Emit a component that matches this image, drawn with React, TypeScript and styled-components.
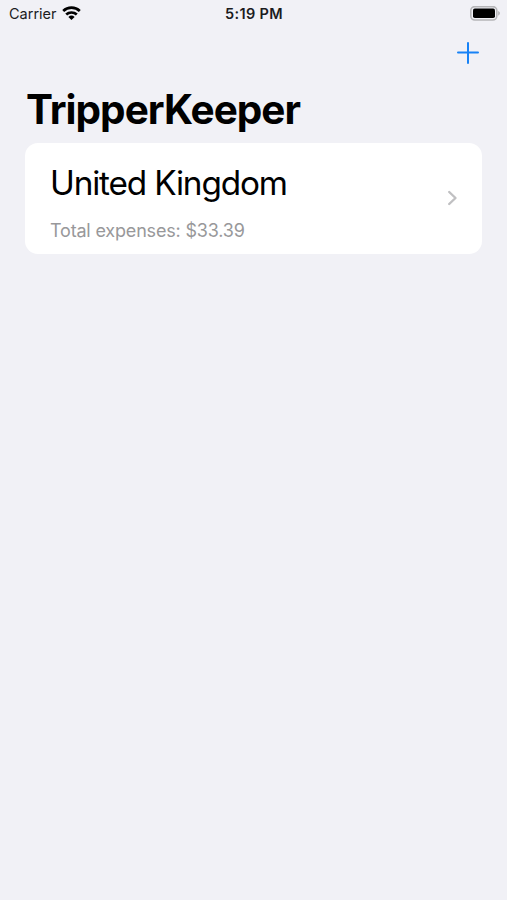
import React from "react";
import styled, { createGlobalStyle } from "styled-components";

const Global = createGlobalStyle`
  * { box-sizing: border-box; }
  html, body { margin: 0; background: #f1f1f6; }
  body { font-family: Inter, "Liberation Sans", sans-serif; color: #000; }
`;

const Screen = styled.div`
  width: 507px;
  height: 900px;
  overflow: hidden;
  background: #f1f1f6;
  display: flex;
  flex-direction: column;
`;

const StatusBar = styled.header`
  height: 27px;
  padding: 0 7px 0 9px;
  display: grid;
  grid-template-columns: 1fr auto 1fr;
  align-items: center;
`;

const Carrier = styled.div`
  display: flex;
  align-items: center;
  gap: 5px;
  font-size: 14.5px;
  line-height: 18px;
  white-space: nowrap;
  color: #1c1c1e;
`;

const WifiIcon = styled.svg`
  display: block;
  margin-bottom: 1px;
`;

const Clock = styled.time`
  margin-right: 1px;
  font-size: 14.5px;
  line-height: 18px;
  font-weight: 600;
  letter-spacing: 0.35px;
  color: #1c1c1e;
`;

const Battery = styled.svg`
  justify-self: end;
  display: block;
`;

const NavBar = styled.nav`
  height: 52px;
  padding: 0 28px;
  display: flex;
  justify-content: flex-end;
  align-items: center;
`;

const AddButton = styled.button`
  border: 0;
  padding: 0;
  background: none;
  display: flex;
`;

const Title = styled.h1`
  margin: 5px 0 0 26px;
  height: 59px;
  font-size: 40.5px;
  line-height: 51px;
  font-weight: 700;
  letter-spacing: -0.98px;
`;

const TripCard = styled.article`
  margin: 0 25px;
  height: 111px;
  padding: 0 24px 0 25px;
  border-radius: 13px;
  background: #fff;
  display: flex;
  align-items: center;
  justify-content: space-between;
`;

const TripInfo = styled.div`
  display: flex;
  flex-direction: column;
  gap: 17px;
  padding-top: 8px;
`;

const Country = styled.h2`
  margin: 0;
  font-size: 33.3px;
  line-height: 40px;
  font-weight: 400;
  letter-spacing: -1.15px;
`;

const Expenses = styled.p`
  margin: 0;
  font-size: 18px;
  line-height: 22px;
  letter-spacing: -0.18px;
  color: #98989a;
`;

const Chevron = styled.svg`
  display: block;
  margin-bottom: 1px;
`;

export default function App() {
  return (
    <>
      <Global />
      <Screen>
        <StatusBar>
          <Carrier>
            Carrier
            <WifiIcon width="19" height="14" viewBox="0 0 19 14" fill="none" stroke="#000" strokeWidth="2.7">
              <path d="M1.2 5a12 12 0 0 1 16.6 0M4.2 8.6a7.7 7.7 0 0 1 10.6 0" />
              <path d="M9.5 14 6.4 10.9a4.5 4.5 0 0 1 6.2 0Z" fill="#000" stroke="none" />
            </WifiIcon>
          </Carrier>
          <Clock>5:19 PM</Clock>
          <Battery width="30" height="15" viewBox="0 0 30 15">
            <rect x=".8" y=".6" width="26" height="13.4" rx="4" fill="none" stroke="#b5b5b8" strokeWidth="1.6" />
            <rect x="3" y="2.6" width="22" height="9.4" rx="1.8" />
            <path d="M28.2 5c2.2.8 2.2 3.8 0 4.6Z" fill="#b0b0b3" />
          </Battery>
        </StatusBar>
        <NavBar>
          <AddButton aria-label="Add trip">
            <svg width="22" height="22" viewBox="0 0 22 22" stroke="#1782f6" strokeWidth="2" strokeLinecap="round">
              <path d="M11 1v20M1 10.5h20" />
            </svg>
          </AddButton>
        </NavBar>
        <Title>TripperKeeper</Title>
        <TripCard>
          <TripInfo>
            <Country>United Kingdom</Country>
            <Expenses>Total expenses: $33.39</Expenses>
          </TripInfo>
          <Chevron width="11" height="16" viewBox="0 0 11 16" fill="none" stroke="#c0c0c2" strokeWidth="2.4" strokeLinecap="round" strokeLinejoin="round">
            <path d="m2.2 2 6.3 6-6.3 6" />
          </Chevron>
        </TripCard>
      </Screen>
    </>
  );
}
